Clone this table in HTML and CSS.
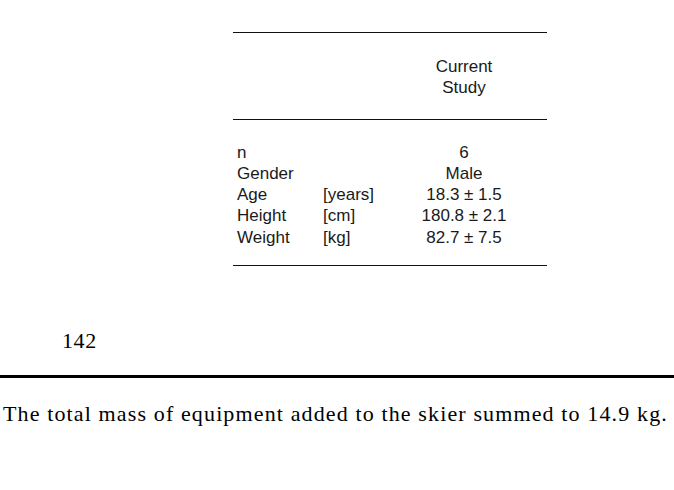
FILE: index.html
```html
<!DOCTYPE html>
<html>
<head>
<meta charset="utf-8">
<link rel="stylesheet" href="styles.css">
</head>
<body>
<div class="page">
  <div class="table">
    <div class="head grid">
      <div></div><div></div>
      <div class="val">Current<br>Study</div>
    </div>
    <div class="body grid">
      <div>n</div><div></div><div class="val">6</div>
      <div>Gender</div><div></div><div class="val">Male</div>
      <div>Age</div><div>[years]</div><div class="val">18.3 ± 1.5</div>
      <div>Height</div><div>[cm]</div><div class="val">180.8 ± 2.1</div>
      <div>Weight</div><div>[kg]</div><div class="val">82.7 ± 7.5</div>
    </div>
  </div>
  <div class="pagenum">142</div>
  <div class="rule"></div>
  <p class="text">The total mass of equipment added to the skier summed to 14.9 kg.</p>
</div>
</body>
</html>
```
FILE: styles.css
```css
html, body {
  margin: 0;
  padding: 0;
  background: #fff;
}
.page {
  width: 674px;
  height: 490px;
  padding-top: 32px;
  box-sizing: border-box;
}
.table {
  margin-left: 233px;
  width: 314px;
  border-top: 1.5px solid #111;
  border-bottom: 1.5px solid #111;
  font-family: "Liberation Sans", Arial, sans-serif;
  font-size: 17px;
  line-height: 21.3px;
  color: #1a1a1a;
}
.grid {
  display: grid;
  grid-template-columns: 86px 70px 142px;
  padding: 0 12px 0 4px;
}
.head {
  padding-top: 23px;
  padding-bottom: 20px;
  border-bottom: 1.5px solid #111;
}
.body {
  padding-top: 22px;
  padding-bottom: 17px;
}
.val {
  text-align: center;
}
.pagenum {
  margin-top: 63px;
  margin-left: 62px;
  font-family: "Liberation Serif", "Times New Roman", serif;
  font-size: 22px;
  line-height: 24px;
  letter-spacing: 0.6px;
  color: #000;
}
.rule {
  margin-top: 22px;
  height: 3px;
  background: #000;
}
.text {
  margin: 24px 0 0 3px;
  font-family: "Liberation Serif", "Times New Roman", serif;
  font-size: 22px;
  line-height: 24px;
  letter-spacing: 1.13px;
  white-space: nowrap;
  color: #000;
}
```
